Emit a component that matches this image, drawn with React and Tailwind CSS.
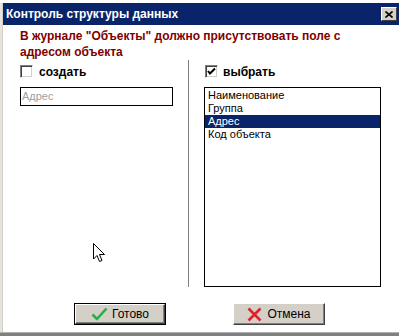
import React from 'react'

const items = ['Наименование', 'Группа', 'Адрес', 'Код объекта']

function CheckBox({ checked }) {
  return (
    <div className="w-[13px] h-[13px] border border-t-[#808080] border-l-[#808080] border-b-white border-r-white bg-white shadow-[inset_1px_1px_#404040,inset_-1px_-1px_#d4d0c8] flex items-center justify-center">
      {checked && (
        <svg width="9" height="9" viewBox="0 0 9 9">
          <path d="M1 4 L3 6.5 L8 1.5" stroke="#000" strokeWidth="2" fill="none" />
        </svg>
      )}
    </div>
  )
}

export default function App() {
  return (
    <div className="w-[399px] h-[336px] bg-white relative overflow-hidden flex flex-col font-['Liberation_Sans',Arial,sans-serif] text-[12px] text-black">
      <div className="h-[3px] bg-white" />
      <div className="flex flex-1">
        <div className="w-[3px] bg-[#e6e4df] border-r border-[#d4d0c8]" />
        <div className="flex-1 flex flex-col">
          {/* title bar */}
          <div className="h-[22px] bg-[#0a246a] flex items-center pl-[3px] pr-[2px]">
            <span className="text-white font-bold text-[12px] flex-1">Контроль структуры данных</span>
            <div className="w-[16px] h-[14px] bg-[#d4d0c8] border border-t-white border-l-white border-b-[#404040] border-r-[#404040] flex items-center justify-center">
              <svg width="8" height="7" viewBox="0 0 8 7">
                <path d="M0.5 0.5 L7.5 6.5 M7.5 0.5 L0.5 6.5" stroke="#000" strokeWidth="1.6" />
              </svg>
            </div>
          </div>

          {/* body */}
          <div className="flex-1 flex flex-col pl-[17px]">
            <div className="mt-[3px] text-[#800000] font-bold leading-[16px]">
              В журнале "Объекты" должно присутствовать поле с<br />адресом объекта
            </div>

            <div className="flex h-[227px]">
              <div className="w-[153px] flex flex-col">
                <div className="flex items-center gap-[6px] mt-[5px] h-[13px]">
                  <CheckBox />
                  <span className="font-bold">создать</span>
                </div>
                <div className="mt-[9px] h-[19px] border border-black flex items-center px-[1px] text-[11px] text-[#a0a0a0] leading-none">
                  Адрес
                </div>
              </div>

              <div className="ml-[15px] w-[1px] bg-[#808080]" />

              <div className="ml-[15px] w-[177px] flex flex-col">
                <div className="flex items-center gap-[5px] mt-[5px] h-[13px] ml-[1px]">
                  <CheckBox checked />
                  <span className="font-bold">выбрать</span>
                </div>
                <div className="mt-[9px] flex-1 border border-black pt-[1px] text-[11px]">
                  {items.map((item) => (
                    <div
                      key={item}
                      className={`h-[13px] leading-[13px] pl-[3px] ${item === 'Адрес' ? 'bg-[#0a246a] text-white' : ''}`}
                    >
                      {item}
                    </div>
                  ))}
                </div>
              </div>
            </div>

            <div className="flex mt-[16px] ml-[54px] gap-[67px]">
              <div className="w-[92px] h-[22px] border border-black">
                <div className="h-full bg-[#d4d0c8] border border-t-white border-l-white border-b-[#404040] border-r-[#404040] shadow-[inset_-1px_-1px_#808080] flex items-center justify-center gap-[4px]">
                  <svg width="17" height="14" viewBox="0 0 17 14">
                    <path d="M1.5 7.5 L6 12 L15.5 1.5" stroke="#22b14c" strokeWidth="2.6" fill="none" strokeLinejoin="round" />
                  </svg>
                  <span>Готово</span>
                </div>
              </div>
              <div className="w-[92px] h-[22px] bg-[#d4d0c8] border border-t-white border-l-white border-b-[#404040] border-r-[#404040] shadow-[inset_-1px_-1px_#808080] flex items-center justify-center gap-[5px]">
                <svg width="15" height="15" viewBox="0 0 15 15">
                  <path d="M1.5 1.5 L13.5 13.5 M13.5 1.5 L1.5 13.5" stroke="#ed1c24" strokeWidth="2.6" />
                </svg>
                <span>Отмена</span>
              </div>
            </div>
          </div>
        </div>
      </div>
      <div className="h-[4px] bg-[#808080] border-t border-[#b0b0b0]" />

      {/* mouse cursor */}
      <svg className="absolute left-[93px] top-[243px]" width="13" height="21" viewBox="0 0 13 21">
        <path d="M0.5 0.5 L0.5 16 L4 12.5 L6.5 18.5 L9 17.5 L6.5 11.5 L11.5 11.5 Z" fill="#fff" stroke="#000" strokeWidth="1" />
      </svg>
    </div>
  )
}
